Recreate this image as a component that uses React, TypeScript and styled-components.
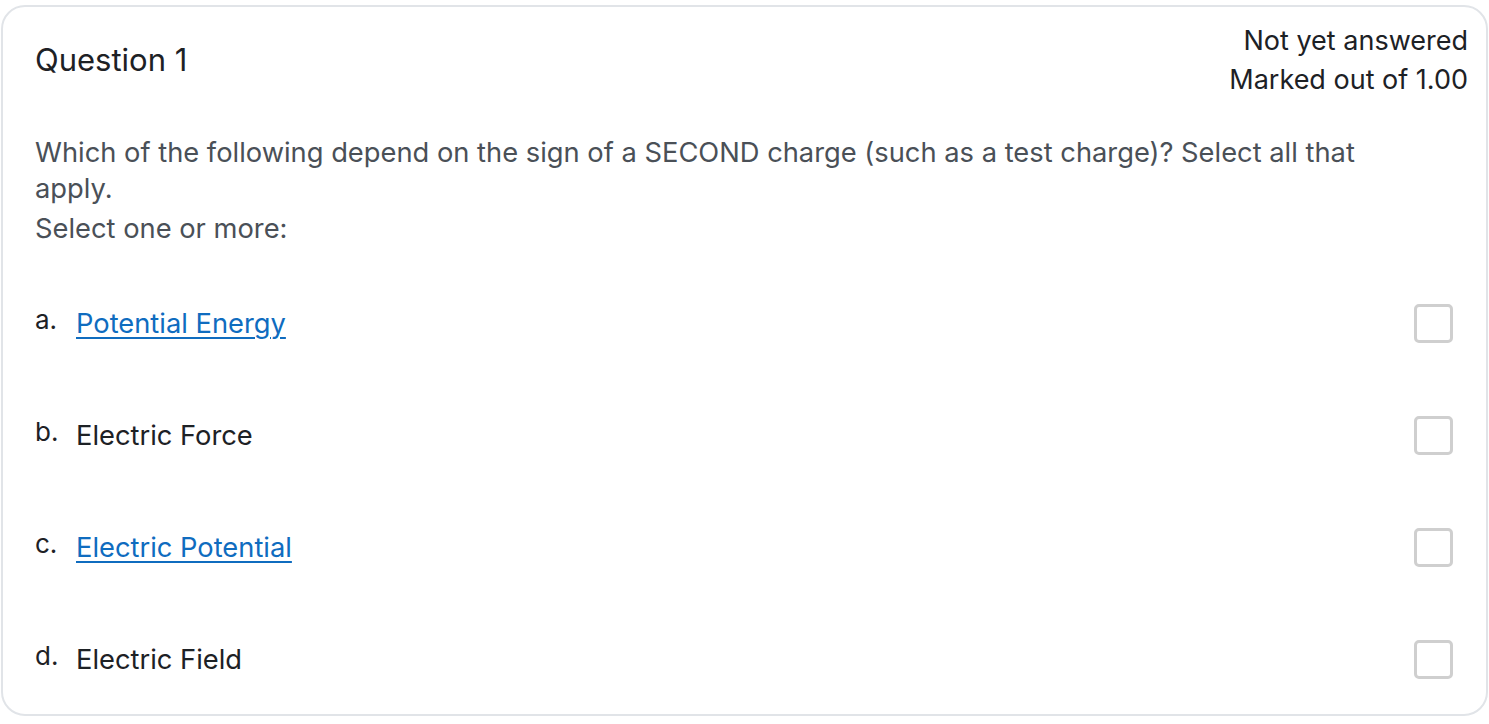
import React from 'react';
import styled, { createGlobalStyle } from 'styled-components';

const GlobalStyle = createGlobalStyle`
  html, body {
    margin: 0;
    padding: 0;
    background: #ffffff;
    font-family: Inter, "Noto Sans", "Liberation Sans", sans-serif;
  }
`;

const Page = styled.div`
  padding: 5px 1px 0 1px;
`;

const Card = styled.div`
  width: 1487px;
  height: 711px;
  box-sizing: border-box;
  border: 2px solid #e1e4e8;
  border-radius: 24px;
  padding: 14px 18px 0 32px;
`;

const Header = styled.div`
  display: flex;
  justify-content: space-between;
  align-items: flex-start;
`;

const Title = styled.h3`
  margin: 19px 0 0 0;
  font-size: 31px;
  line-height: 40px;
  font-weight: 400;
  color: #1d2125;
`;

const Status = styled.div`
  text-align: right;
  font-size: 27px;
  line-height: 39px;
  color: #1d2125;
`;

const Prompt = styled.div`
  margin-top: 36px;
  font-size: 27.3px;
  line-height: 36px;
  color: #4a5057;
  padding-right: 80px;
`;

const Hint = styled.div`
  margin-top: 4px;
  font-size: 27.3px;
  line-height: 36px;
  color: #4a5057;
`;

const Options = styled.div`
  margin-top: 54px;
  padding-right: 15px;
  display: flex;
  flex-direction: column;
  gap: 68px;
`;

const OptionRow = styled.label`
  display: flex;
  align-items: center;
  height: 44px;
`;

const Letter = styled.span`
  width: 41px;
  font-size: 26px;
  color: #1d2125;
  align-self: flex-start;
  line-height: 38px;
`;

const OptionText = styled.span<{ $link?: boolean }>`
  flex: 1;
  font-size: 27.3px;
  color: ${p => (p.$link ? '#0f6cbf' : '#1d2125')};
  text-decoration: ${p => (p.$link ? 'underline' : 'none')};
  text-underline-offset: 4px;
  text-decoration-thickness: 2px;
`;

const Box = styled.span`
  width: 39px;
  height: 39px;
  box-sizing: border-box;
  border: 3px solid #cfcfcf;
  border-radius: 5px;
  background: #fff;
`;

const options = [
  { letter: 'a.', text: 'Potential Energy', link: true },
  { letter: 'b.', text: 'Electric Force', link: false },
  { letter: 'c.', text: 'Electric Potential', link: true },
  { letter: 'd.', text: 'Electric Field', link: false },
];

export default function App() {
  return (
    <Page>
      <GlobalStyle />
      <Card>
        <Header>
          <Title>Question 1</Title>
          <Status>
            <div>Not yet answered</div>
            <div>Marked out of 1.00</div>
          </Status>
        </Header>
        <Prompt>
          Which of the following depend on the sign of a SECOND charge (such as a test charge)? Select all that apply.
        </Prompt>
        <Hint>Select one or more:</Hint>
        <Options>
          {options.map(o => (
            <OptionRow key={o.letter}>
              <Letter>{o.letter}</Letter>
              <OptionText $link={o.link}>{o.text}</OptionText>
              <Box />
            </OptionRow>
          ))}
        </Options>
      </Card>
    </Page>
  );
}
